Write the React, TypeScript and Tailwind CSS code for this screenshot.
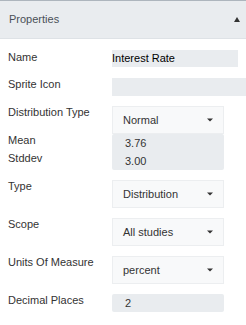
import React from 'react';

const Caret = () => (
    <svg width="6" height="4" viewBox="0 0 6 4" className="fill-[#333]">
        <path d="M0 0.5 L6 0.5 L3 3.5 Z" />
    </svg>
);

interface RowProps {
    label: string;
    className?: string;
    children: React.ReactNode;
}

const Row: React.FC<RowProps> = ({ label, className = '', children }) => (
    <div className={`flex items-start ${className}`}>
        <div className="w-[112px] shrink-0 pl-2 leading-[12px] text-[#333]">{label}</div>
        {children}
    </div>
);

const SelectBox = ({ value }: { value: string }) => (
    <div className="w-[112px] h-[28px] flex items-center justify-between pl-[10px] pr-[10px] bg-[#f8f9fa] border border-[#eceef0] text-[#333]">
        <span>{value}</span>
        <Caret />
    </div>
);

export default function App() {
    return (
        <div className="w-[246px] h-[325px] bg-white text-[11px] overflow-hidden" style={{ fontFamily: '"Liberation Sans", Arial, sans-serif' }}>
            {/* Header */}
            <div className="h-[39px] bg-[#e9ecef] border-t border-[#adb5bd] border-b border-b-[#dee2e6] flex items-center justify-between pl-[9px] pr-[6px]">
                <span className="text-[#495057] text-[11px]">Properties</span>
                <svg width="6" height="5" viewBox="0 0 6 5" className="fill-[#333]">
                    <path d="M3 0 L6 5 L0 5 Z" />
                </svg>
            </div>

            <Row label="Name" className="mt-[11px] pt-[1px]">
                <div className="w-[126px] h-[17px] -mt-[1px] bg-[#e9ecef] flex items-center text-black">Interest Rate</div>
            </Row>

            <Row label="Sprite Icon" className="mt-[11px]">
                <div className="flex-1 h-[18px] bg-[#e9ecef]"></div>
            </Row>

            <Row label="Distribution Type" className="mt-[10px]">
                <SelectBox value="Normal" />
            </Row>

            <Row label="Mean">
                <div className="w-[112px] h-[18px] bg-[#e9ecef] flex items-center pl-[13px] text-[#333] rounded-t-[2px]">3.76</div>
            </Row>

            <Row label="Stddev">
                <div className="w-[112px] h-[18px] bg-[#e9ecef] flex items-center pl-[13px] text-[#333] rounded-b-[2px]">3.00</div>
            </Row>

            <Row label="Type" className="mt-[10px]">
                <SelectBox value="Distribution" />
            </Row>

            <Row label="Scope" className="mt-[10px]">
                <SelectBox value="All studies" />
            </Row>

            <Row label="Units Of Measure" className="mt-[10px]">
                <SelectBox value="percent" />
            </Row>

            <Row label="Decimal Places" className="mt-[10px]">
                <div className="w-[112px] h-[18px] bg-[#e9ecef] flex items-center pl-[13px] text-[#333] rounded-[2px]">2</div>
            </Row>
        </div>
    );
}
